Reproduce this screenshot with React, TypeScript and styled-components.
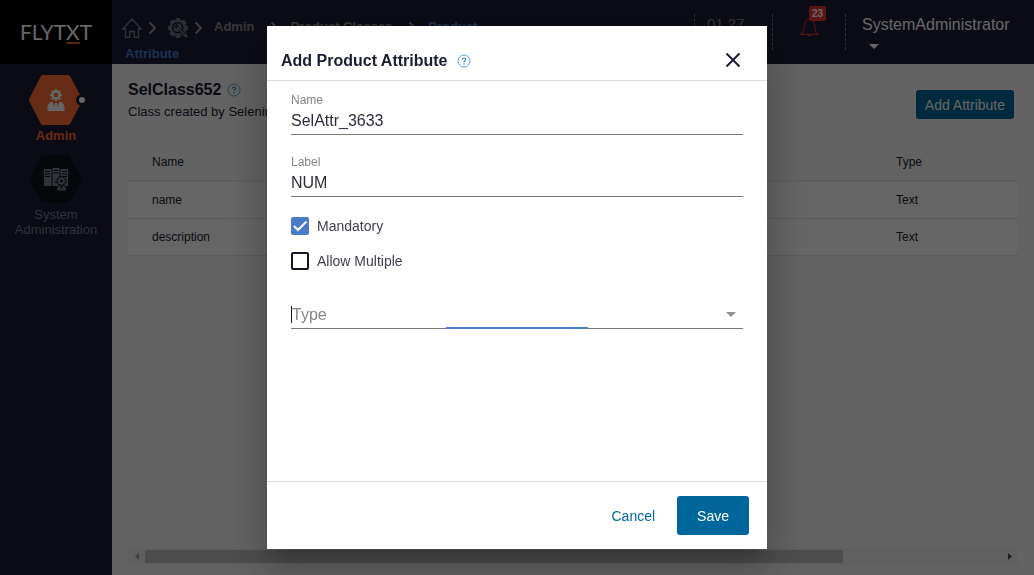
import React, { useState } from "react";
import styled, { createGlobalStyle } from "styled-components";

const GlobalStyle = createGlobalStyle`
  *, *::before, *::after { box-sizing: border-box; }
  body {
    margin: 0;
    font-family: "Liberation Sans", Arial, sans-serif;
    font-size: 13px;
    color: #1b1d32;
    background: #f7f7f7;
  }
  button, input { font-family: inherit; }
`;

const Shell = styled.div`
  display: grid;
  grid-template-columns: 112px 1fr;
  grid-template-rows: 64px 1fr;
  min-height: 100vh;
`;

const Logo = styled.div`
  background: #000;
  color: #fff;
  font-family: Lato, sans-serif;
  font-size: 21px;
  line-height: 64px;
  text-align: center;
`;

const LogoMark = styled.span`
  text-decoration: underline 2px #d9601f;
  text-decoration-skip-ink: none;
  text-underline-offset: 2px;
`;

const Header = styled.header`
  display: flex;
  justify-content: space-between;
  background: #1b1d34;
`;

const Breadcrumbs = styled.nav`
  max-width: 400px;
  padding: 13px 0 0 13px;
  text-indent: -3px;
  line-height: 27px;
  font-weight: bold;

  svg { vertical-align: middle; }
`;

const CrumbLink = styled.a<{ $current?: boolean; $icon?: boolean }>`
  color: ${(p) => (p.$current ? "#4a7ac7" : "#8c8c8c")};
  text-decoration: none;
  padding-right: ${(p) => (p.$icon ? 6 : p.$current ? 0 : 16)}px;
`;

const CrumbArrow = styled.svg`
  width: 9px;
  height: 14px;
  margin-right: 11px;
`;

const HeaderTools = styled.div`
  display: flex;
  padding-top: 14px;
`;

const Tool = styled.div<{ $width: number }>`
  width: ${(p) => p.$width}px;
  height: 36px;
  border-left: 1px dashed #777;
`;

const Clock = styled.time`
  display: block;
  padding-left: 12px;
  font-size: 15px;
  line-height: 20px;
  color: #8c8c8c;
`;

const BellButton = styled.button`
  position: relative;
  display: block;
  margin: 2px 0 0 27px;
  padding: 0;
  border: 0;
  background: none;

  svg { display: block; }
`;

const Badge = styled.span`
  position: absolute;
  top: -10px;
  left: 9px;
  width: 17px;
  border-radius: 2px;
  background: #e53935;
  color: #fff;
  font-size: 10px;
  font-weight: bold;
  line-height: 15px;
  text-align: center;
`;

const UserButton = styled.button`
  display: flex;
  flex-direction: column;
  gap: 8px;
  padding: 0 0 0 16px;
  border: 0;
  background: none;
  color: #fff;
  font-size: 16px;
  line-height: 22px;
`;

const Triangle = styled.svg`
  width: 10px;
  height: 5px;
  margin: 0 7px;
`;

const Sidebar = styled.nav`
  display: flex;
  flex-direction: column;
  gap: 11px;
  padding-top: 11px;
  background: #1b1d34;
`;

const SideLink = styled.a<{ $active?: boolean }>`
  display: flex;
  flex-direction: column;
  align-items: center;
  gap: 3px;
  color: ${(p) => (p.$active ? "#ff6b3d" : "#73828f")};
  font-weight: ${(p) => (p.$active ? "bold" : "normal")};
  line-height: 15px;
  text-align: center;
  text-decoration: none;
`;

const Main = styled.main`
  display: flex;
  flex-direction: column;
  min-width: 0;
  padding: 16px 16px 10px;
`;

const TitleBar = styled.div`
  display: flex;
  align-items: flex-start;
  justify-content: space-between;
  padding-right: 4px;
`;

const Title = styled.h1`
  display: flex;
  align-items: center;
  gap: 6px;
  margin: 0;
  font-size: 16px;
  line-height: 20px;
`;

const Description = styled.p`
  margin: 2px 0 0;
  line-height: 20px;
`;

const AddButton = styled.button`
  height: 29px;
  margin-top: 10px;
  padding: 0 9px;
  border: 0;
  border-radius: 3px;
  background: #00669b;
  color: #fff;
  font-size: 14px;
`;

const Table = styled.table`
  width: 100%;
  margin-top: 22px;
  border-collapse: collapse;
  table-layout: fixed;
  font-size: 12px;
  text-align: left;

  th, td { height: 37px; padding: 0 24px; font-weight: normal; }
  th:first-child { width: 744px; }
  thead tr { border-bottom: 2px solid #e9e9e9; }
  tbody tr { background: #fff; border-bottom: 1px solid #e2e2e2; }
`;

const Scroller = styled.div`
  display: grid;
  grid-template-columns: 17px 1fr 17px;
  align-items: center;
  justify-items: center;
  height: 17px;
  margin-top: auto;
  background: #f1f1f1;
`;

const ScrollTrack = styled.div`
  width: 100%;
`;

const ScrollThumb = styled.div`
  width: 81.5%;
  height: 13px;
  background: #c1c1c1;
`;

const Backdrop = styled.div`
  position: fixed;
  inset: 0;
  display: flex;
  align-items: center;
  justify-content: center;
  background: rgba(0, 0, 0, 0.6);
`;

const Dialog = styled.form`
  display: flex;
  flex-direction: column;
  width: 500px;
  max-width: 90vw;
  background: #fff;
  box-shadow: 0 11px 15px -7px rgba(0, 0, 0, 0.2),
    0 24px 38px 3px rgba(0, 0, 0, 0.14), 0 9px 46px 8px rgba(0, 0, 0, 0.12);
`;

const DialogHeader = styled.div`
  display: flex;
  align-items: center;
  justify-content: space-between;
  padding: 14px 26px 0 14px;
  height: 55px;
  border-bottom: 1px solid #dcdcdc;
`;

const DialogTitle = styled.h2`
  display: flex;
  align-items: center;
  gap: 9px;
  margin: 0;
  padding-top: 2px;
  font-size: 16px;
  line-height: 20px;
`;

const CloseButton = styled.button`
  padding: 0;
  border: 0;
  background: none;

  svg { display: block; }
`;

const DialogBody = styled.div`
  display: flex;
  flex-direction: column;
  min-height: 400px;
  padding: 11px 24px;
`;

const Field = styled.label`
  display: flex;
  flex-direction: column;
  margin-bottom: 19px;
  border-bottom: 1px solid #7b7b7b;
  color: #858585;
  font-size: 12px;
  line-height: 16px;
`;

const TextInput = styled.input`
  width: 100%;
  height: 26px;
  padding: 0;
  border: 0;
  outline: 0;
  background: none;
  color: #2b2d3f;
  font-size: 16px;
`;

const CheckRow = styled.label`
  display: flex;
  align-items: center;
  gap: 8px;
  margin: 1px 0 16px;
  color: #3d3f4e;
  font-size: 14px;
  line-height: 18px;
`;

const CheckFrame = styled.span`
  display: grid;

  > * { grid-area: 1 / 1; }
  svg { pointer-events: none; }
`;

const CheckInput = styled.input`
  appearance: none;
  width: 18px;
  height: 18px;
  margin: 0;
  border: 2px solid #14162a;
  border-radius: 2px;

  &:checked { border-color: #4a7bc8; background: #4a7bc8; }
  &:not(:checked) + svg { visibility: hidden; }
`;

const Combo = styled.div`
  display: flex;
  align-items: center;
  margin-top: 20px;
  padding: 0 7px 5px 0;
  border-bottom: 1px solid #7b7b7b;
  position: relative;
`;

const ComboInput = styled.input`
  flex: 1;
  min-width: 0;
  height: 17px;
  padding: 0;
  border: 0;
  border-left: 1px solid #14162a;
  outline: 0;
  font-size: 16px;
  line-height: 17px;

  &::placeholder { color: #858585; opacity: 1; }
`;

const Progress = styled.span`
  position: absolute;
  bottom: -1px;
  left: 155px;
  width: 142px;
  height: 2px;
  background: #4a7bc8;
`;

const ComboButton = styled.button`
  display: flex;
  padding: 0;
  border: 0;
  background: none;

  svg { margin: 0; }
`;

const DialogFooter = styled.div`
  display: flex;
  align-items: center;
  justify-content: flex-end;
  height: 68px;
  padding-right: 18px;
  border-top: 1px solid #dcdcdc;
`;

const FooterButton = styled.button<{ $primary?: boolean }>`
  height: 39px;
  padding: 0 ${(p) => (p.$primary ? 20 : 22)}px;
  border: 0;
  border-radius: 3px;
  background: ${(p) => (p.$primary ? "#00669b" : "none")};
  color: ${(p) => (p.$primary ? "#fff" : "#00669b")};
  font-size: 14px;
`;

const HelpIcon = () => (
  <svg width="14" height="14" viewBox="0 0 14 14" fill="none" stroke="#5fa5ca" aria-label="Help">
    <circle cx="7" cy="7" r="6" />
    <path d="M5.3 5.700c0-2.300 3.400-2.200 3.400-.2 0 1.200-1.700 1.300-1.700 2.600M7 9.300v1.200" stroke="#2a83b4" strokeWidth="1.100" />
  </svg>
);

const Arrow = () => (
  <CrumbArrow viewBox="0 0 9 14" fill="none" stroke="#999" strokeWidth="2">
    <path d="M1.500 1.500 7 7l-5.500 5.500" />
  </CrumbArrow>
);

const HomeIcon = () => (
  <svg width="20" height="20" viewBox="0 0 20 20" fill="none" stroke="#7c7f89" strokeWidth="1.300" aria-label="Home">
    <path d="M.8 11 10 1l9.200 10h-2.700v8.300h-4.300v-5.800H7.800v5.800H3.500V11z" />
  </svg>
);

const teeth = [0, 45, 90, 135, 180, 225, 270, 315];

const SettingsIcon = () => (
  <svg width="20" height="20" viewBox="0 0 20 20" aria-label="Settings">
    <g fill="#6d717e">
      {teeth.map((a) => (
        <rect key={a} x="7.500" y="0" width="5" height="4" rx="1" transform={`rotate(${a} 10 10)`} />
      ))}
      <circle cx="10" cy="10" r="8.300" />
    </g>
    <circle cx="9.700" cy="9.700" r="5" fill="none" stroke="#1b1d34" strokeWidth="1.600" />
    <path d="m11 11 7 7" fill="none" stroke="#1b1d34" strokeWidth="3.600" />
    <path d="m8 6.500 1.800 1.800-1.500 1.500L6.700 8" fill="none" stroke="#1b1d34" strokeWidth="1.400" />
    <path d="m10.500 10.500 7.500 7.500" fill="none" stroke="#6d717e" strokeWidth="1.800" />
    <circle cx="18" cy="18" r="1.600" fill="#6d717e" />
  </svg>
);

const BellIcon = () => (
  <svg width="19" height="21" viewBox="0 0 19 21" fill="none" stroke="#c9302c" strokeWidth="1.200">
    <path d="M1 18.400h17c-1.700-1-2.300-2.400-2.700-5C14.700 9 14.500 3.500 9.500 3.500S4.300 9 3.700 13.400C3.300 16 2.700 17.400 1 18.400z" />
    <path d="M8 19.300h3M9.500 3.500V2" strokeWidth="2" />
  </svg>
);

const Gear = ({ x, y, r, color, hole }: { x: number; y: number; r: number; color: string; hole: string }) => (
  <g transform={`translate(${x} ${y})`} fill={color}>
    {teeth.map((a) => (
      <rect key={a} x={-r / 4} y={-r * 1.3} width={r / 2} height={r} transform={`rotate(${a})`} />
    ))}
    <circle r={r} />
    <circle r={r * 0.5} fill={hole} />
  </g>
);

const AdminIcon = () => (
  <svg width="58" height="50" viewBox="0 0 58 50">
    <path d="M16 0h25q1.500 0 2.300 1.500L55 23.500q.8 1.500 0 3L43.300 48.500Q42.500 50 41 50H16q-1.500 0-2.300-1.500L2.400 26.500q-.8-1.500 0-3L13.700 1.500Q14.500 0 16 0z" fill="#ff6e38" />
    <Gear x={29} y={20} r={4.6} color="#fff" hole="#ff6e38" />
    <path d="M20.500 36v-2.500c0-4 1.500-5.800 4.800-7l3.700 9 3.700-9c3.300 1.200 4.800 3 4.800 7V36z" fill="#fff" />
    <path d="M28 28h2l1 5-2 2.500-2-2.500z" fill="#fff" />
    <circle cx="54.500" cy="25" r="5.500" fill="#1b1d34" />
    <circle cx="55" cy="25" r="3" fill="#fff" />
  </svg>
);

const SystemIcon = () => (
  <svg width="58" height="50" viewBox="0 0 58 50">
    <path d="M15 1h27l13.500 24L42 49H15L2 25z" fill="#111319" />
    <path d="M17 15h7.500v17H17zM25.500 14h7v18h-7zM33.500 15H41v17h-7.500z" fill="#73828f" />
    <path d="M18 17.500h5M18 20h5M18 22.500h5M26.500 16.500h5M26.500 19h5M35 17.500h5M35 20h5M35 22.500h5" stroke="#111319" />
    <circle cx="29" cy="28" r="1" fill="#111319" />
    <circle cx="34.500" cy="27" r="5" fill="#111319" />
    <path d="M29 37c0-4 2-5.500 5.500-5.500S40 33 40 37z" fill="#111319" />
    <Gear x={34.5} y={27} r={3.2} color="#73828f" hole="#111319" />
    <path d="M30 36.500c0-3 1-4.200 3-4.700l1.500 3.500 1.500-3.500c2 .5 3 1.700 3 4.700z" fill="#73828f" />
  </svg>
);

const rows = [
  { name: "name", type: "Text" },
  { name: "description", type: "Text" },
];

export default function App() {
  const [name, setName] = useState("SelAttr_3633");
  const [label, setLabel] = useState("NUM");
  const [mandatory, setMandatory] = useState(true);
  const [multiple, setMultiple] = useState(false);

  return (
    <>
      <GlobalStyle />
      <Shell>
        <Logo>
          FLYT<LogoMark>X</LogoMark>T
        </Logo>
        <Header>
          <Breadcrumbs aria-label="Breadcrumb">
            <CrumbLink href="#home" $icon><HomeIcon /></CrumbLink>
            <Arrow />
            <CrumbLink href="#settings" $icon><SettingsIcon /></CrumbLink>
            <Arrow />
            <CrumbLink href="#admin">Admin</CrumbLink>
            <Arrow />
            <CrumbLink href="#classes">Product Classes</CrumbLink>
            <Arrow />
            <CrumbLink href="#attribute" $current>Product Attribute</CrumbLink>
          </Breadcrumbs>
          <HeaderTools>
            <Tool $width={78}><Clock>01 27</Clock></Tool>
            <Tool $width={73}>
              <BellButton type="button" aria-label="Notifications">
                <BellIcon />
                <Badge>23</Badge>
              </BellButton>
            </Tool>
            <Tool $width={189}>
              <UserButton type="button">
                SystemAdministrator
                <Triangle viewBox="0 0 10 5" fill="#fff"><path d="M0 0h10L5 5z" /></Triangle>
              </UserButton>
            </Tool>
          </HeaderTools>
        </Header>
        <Sidebar>
          <SideLink href="#admin" $active>
            <AdminIcon />
            Admin
          </SideLink>
          <SideLink href="#system">
            <SystemIcon />
            <span>System Administration</span>
          </SideLink>
        </Sidebar>
        <Main>
          <TitleBar>
            <div>
              <Title>SelClass652 <HelpIcon /></Title>
              <Description>Class created by Selenium</Description>
            </div>
            <AddButton type="button">Add Attribute</AddButton>
          </TitleBar>
          <Table>
            <thead>
              <tr><th>Name</th><th>Type</th></tr>
            </thead>
            <tbody>
              {rows.map((row) => (
                <tr key={row.name}><td>{row.name}</td><td>{row.type}</td></tr>
              ))}
            </tbody>
          </Table>
          <Scroller>
            <svg width="4" height="7" viewBox="0 0 4 7" fill="#a3a3a3"><path d="M4 0v7L0 3.500z" /></svg>
            <ScrollTrack><ScrollThumb /></ScrollTrack>
            <svg width="4" height="7" viewBox="0 0 4 7" fill="#505050"><path d="M0 0v7l4-3.500z" /></svg>
          </Scroller>
        </Main>
      </Shell>
      <Backdrop>
        <Dialog role="dialog" aria-labelledby="dialog-title" onSubmit={(e) => e.preventDefault()}>
          <DialogHeader>
            <DialogTitle id="dialog-title">Add Product Attribute <HelpIcon /></DialogTitle>
            <CloseButton type="button" aria-label="Close">
              <svg width="16" height="16" viewBox="0 0 16 16" stroke="#1b1d32" strokeWidth="2"><path d="m1.500 1.500 13 13m0-13-13 13" /></svg>
            </CloseButton>
          </DialogHeader>
          <DialogBody>
            <Field>
              Name
              <TextInput value={name} onChange={(e) => setName(e.target.value)} />
            </Field>
            <Field>
              Label
              <TextInput value={label} onChange={(e) => setLabel(e.target.value)} />
            </Field>
            <CheckRow>
              <CheckFrame>
                <CheckInput type="checkbox" checked={mandatory} onChange={(e) => setMandatory(e.target.checked)} />
                <svg width="18" height="18" viewBox="0 0 18 18" fill="none" stroke="#fff" strokeWidth="2"><path d="m3 9 4 4 8.500-8.500" /></svg>
              </CheckFrame>
              Mandatory
            </CheckRow>
            <CheckRow>
              <CheckFrame>
                <CheckInput type="checkbox" checked={multiple} onChange={(e) => setMultiple(e.target.checked)} />
                <svg width="18" height="18" viewBox="0 0 18 18" fill="none" stroke="#fff" strokeWidth="2"><path d="m3 9 4 4 8.500-8.500" /></svg>
              </CheckFrame>
              Allow Multiple
            </CheckRow>
            <Combo>
              <ComboInput placeholder="Type" aria-label="Type" />
              <ComboButton type="button" aria-label="Show types">
                <Triangle viewBox="0 0 10 5" fill="#949494"><path d="M0 0h10L5 5z" /></Triangle>
              </ComboButton>
              <Progress />
            </Combo>
          </DialogBody>
          <DialogFooter>
            <FooterButton type="button">Cancel</FooterButton>
            <FooterButton type="submit" $primary>Save</FooterButton>
          </DialogFooter>
        </Dialog>
      </Backdrop>
    </>
  );
}
